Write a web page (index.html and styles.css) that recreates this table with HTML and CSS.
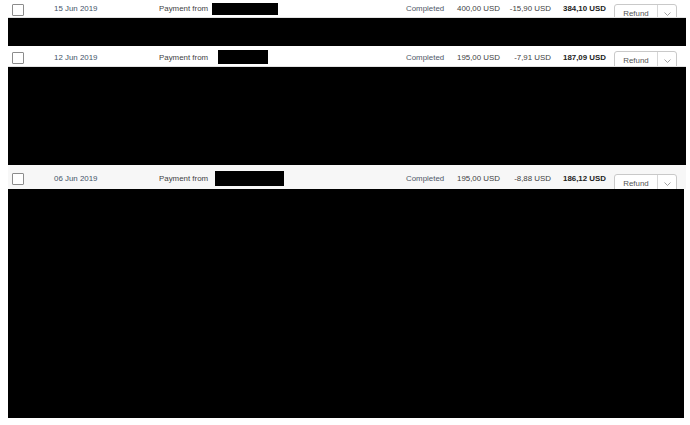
FILE: index.html
```html
<!DOCTYPE html>
<html>
<head>
<meta charset="utf-8">
<link rel="stylesheet" href="styles.css">
</head>
<body>
<div class="list">
  <div class="txn">
    <div class="head head-first">
      <div class="cell cb"><span class="box"></span></div>
      <div class="cell date">15 Jun 2019</div>
      <div class="cell desc">Payment from <span class="redact redact-a"></span></div>
      <div class="cell status">Completed</div>
      <div class="cell gross">400,00 USD</div>
      <div class="cell fee">-15,90 USD</div>
      <div class="cell net">384,10 USD</div>
      <div class="cell act"><span class="btn"><span class="btn-main">Refund</span><span class="btn-drop"><svg width="7" height="4" viewBox="0 0 7 4"><path d="M0.5 0.5 L3.5 3.5 L6.5 0.5" fill="none" stroke="#999" stroke-width="0.9"/></svg></span></span></div>
    </div>
    <div class="detail detail-a"></div>
  </div>
  <div class="txn">
    <div class="head">
      <div class="cell cb"><span class="box"></span></div>
      <div class="cell date">12 Jun 2019</div>
      <div class="cell desc">Payment from <span class="redact redact-b"></span></div>
      <div class="cell status">Completed</div>
      <div class="cell gross">195,00 USD</div>
      <div class="cell fee">-7,91 USD</div>
      <div class="cell net">187,09 USD</div>
      <div class="cell act"><span class="btn"><span class="btn-main">Refund</span><span class="btn-drop"><svg width="7" height="4" viewBox="0 0 7 4"><path d="M0.5 0.5 L3.5 3.5 L6.5 0.5" fill="none" stroke="#999" stroke-width="0.9"/></svg></span></span></div>
    </div>
    <div class="detail detail-b"></div>
  </div>
  <div class="txn">
    <div class="head head-hover">
      <div class="cell cb"><span class="box"></span></div>
      <div class="cell date">06 Jun 2019</div>
      <div class="cell desc">Payment from <span class="redact redact-c"></span></div>
      <div class="cell status">Completed</div>
      <div class="cell gross">195,00 USD</div>
      <div class="cell fee">-8,88 USD</div>
      <div class="cell net">186,12 USD</div>
      <div class="cell act"><span class="btn"><span class="btn-main">Refund</span><span class="btn-drop"><svg width="7" height="4" viewBox="0 0 7 4"><path d="M0.5 0.5 L3.5 3.5 L6.5 0.5" fill="none" stroke="#999" stroke-width="0.9"/></svg></span></span></div>
    </div>
    <div class="detail detail-c"></div>
  </div>
</div>
</body>
</html>
```
FILE: styles.css
```css
html, body {
  background: #fff;
}
body {
  margin: 0 0 0 8px;
  font-family: "Liberation Sans", Arial, sans-serif;
  font-size: 7.9px;
  color: #444;
  overflow: hidden;
}
.list {
  width: 678px;
  margin-top: -3px;
}
.head {
  display: grid;
  grid-template-columns: 46px 105px 247px 51px 43px 51px 63px 63px;
  align-items: start;
  height: 20px;
  border-bottom: 1px solid #e3e3e3;
  overflow: hidden;
}
.head-hover {
  height: 24px;
  background: #f7f7f7;
  border-bottom: none;
}
.cell {
  line-height: 10px;
  padding-top: 7px;
  white-space: nowrap;
}
.head-hover .cell {
  padding-top: 9px;
}
.cb {
  padding-top: 0;
  padding-left: 4px;
}
.head-hover .cb { padding-top: 0; }
.box {
  display: block;
  width: 10px;
  height: 10px;
  margin-top: 6px;
  border: 1px solid #8c8c8c;
  border-radius: 1px;
  background: #fff;
}
.head-first .box { margin-top: 7px; }
.head-hover .box { margin-top: 8px; }
.date {
  color: #45546a;
}
.desc {
  display: flex;
  align-items: flex-start;
  color: #3f3f3f;
}
.redact {
  display: inline-block;
  background: #000;
}
.redact-a { width: 66px; height: 12px; margin-left: 4px; margin-top: -1px; }
.redact-b { width: 50px; height: 14px; margin-left: 10px; margin-top: -3px; }
.redact-c { width: 69px; height: 15px; margin-left: 7px; margin-top: -3px; }
.status {
  color: #4f5868;
}
.gross, .fee {
  color: #3f3f3f;
}
.fee {
  text-align: right;
}
.net {
  padding-left: 12px;
  font-weight: bold;
  color: #222;
}
.act {
  padding-top: 5px;
}
.head-first .act { padding-top: 7px; }
.head-hover .act { padding-top: 9px; }
.btn {
  display: flex;
  width: 61px;
  height: 20px;
  border: 1px solid #c9c9c9;
  border-radius: 3px;
  background: #fff;
}
.btn-main {
  width: 42px;
  border-right: 1px solid #d6d6d6;
  text-align: center;
  line-height: 18px;
  color: #555;
}
.btn-drop {
  flex: 1;
  display: flex;
  justify-content: center;
  padding-top: 7px;
}
.detail {
  background: #000;
}
.detail-a { height: 28px; }
.detail-b { height: 98px; }
.detail-c { height: 229px; width: 676px; }
```
